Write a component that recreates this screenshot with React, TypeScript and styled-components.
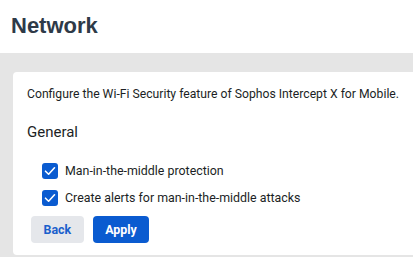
import React from "react";
import styled, { createGlobalStyle } from "styled-components";

const Global = createGlobalStyle`
  html, body { margin: 0; padding: 0; background: #ffffff; }
  body { font-family: Roboto, "Noto Sans", sans-serif; color: #1c1f25; }
  * { box-sizing: border-box; }
`;

const Page = styled.div`
  width: 413px;
  height: 257px;
  display: flex;
  flex-direction: column;
  overflow: hidden;
`;

const Header = styled.header`
  height: 53px;
  display: flex;
  align-items: center;
  padding-left: 11px;
  padding-bottom: 1px;
`;

const Title = styled.h1`
  margin: 0;
  font-family: "Liberation Sans", Arial, sans-serif;
  font-weight: 700;
  font-size: 22px;
  color: #2e3a48;
`;

const Body = styled.main`
  flex: 1;
  background: #e5e5e5;
  padding: 19px 0 2px 13px;
  display: flex;
`;

const Card = styled.section`
  flex: 1;
  background: #ffffff;
  border-radius: 4px 0 0 4px;
  padding: 14px 0 0 14px;
  display: flex;
  flex-direction: column;
`;

const Description = styled.p`
  margin: 0;
  font-size: 12.2px;
  line-height: 16px;
  white-space: nowrap;
  color: #1c1f25;
`;

const SectionTitle = styled.h2`
  margin: 21px 0 0;
  font-size: 15px;
  font-weight: 400;
  line-height: 18px;
  color: #1c1f25;
`;

const OptionList = styled.div`
  margin-top: 22px;
  padding-left: 15px;
  display: flex;
  flex-direction: column;
  gap: 11px;
`;

const Option = styled.label`
  display: flex;
  align-items: center;
  gap: 7px;
  font-size: 12.4px;
  line-height: 16px;
  color: #1c1f25;
`;

const Box = styled.span`
  width: 16px;
  height: 16px;
  border-radius: 3px;
  background: #0a5bd0;
  display: flex;
  align-items: center;
  justify-content: center;
`;

const Actions = styled.div`
  margin-top: 10px;
  padding-left: 4px;
  display: flex;
  gap: 9px;
`;

const Button = styled.button<{ $primary?: boolean }>`
  height: 27px;
  padding: 0 12.5px;
  border: none;
  border-radius: 4px;
  font-family: Roboto, "Noto Sans", sans-serif;
  font-size: 12.4px;
  font-weight: 700;
  background: ${(p) => (p.$primary ? "#0a5bd0" : "#e5e7eb")};
  color: ${(p) => (p.$primary ? "#ffffff" : "#1a5fcc")};
`;

const Check = () => (
  <Box>
    <svg width="12" height="12" viewBox="0 0 12 12" fill="none">
      <path d="M1.5 6.2 L4.6 9.2 L10.5 2.8" stroke="#fff" strokeWidth="1.6" strokeLinecap="round" strokeLinejoin="round" />
    </svg>
  </Box>
);

export default function App() {
  return (
    <Page>
      <Global />
      <Header>
        <Title>Network</Title>
      </Header>
      <Body>
        <Card>
          <Description>Configure the Wi-Fi Security feature of Sophos Intercept X for Mobile.</Description>
          <SectionTitle>General</SectionTitle>
          <OptionList>
            <Option>
              <Check />
              Man-in-the-middle protection
            </Option>
            <Option>
              <Check />
              Create alerts for man-in-the-middle attacks
            </Option>
          </OptionList>
          <Actions>
            <Button>Back</Button>
            <Button $primary>Apply</Button>
          </Actions>
        </Card>
      </Body>
    </Page>
  );
}
